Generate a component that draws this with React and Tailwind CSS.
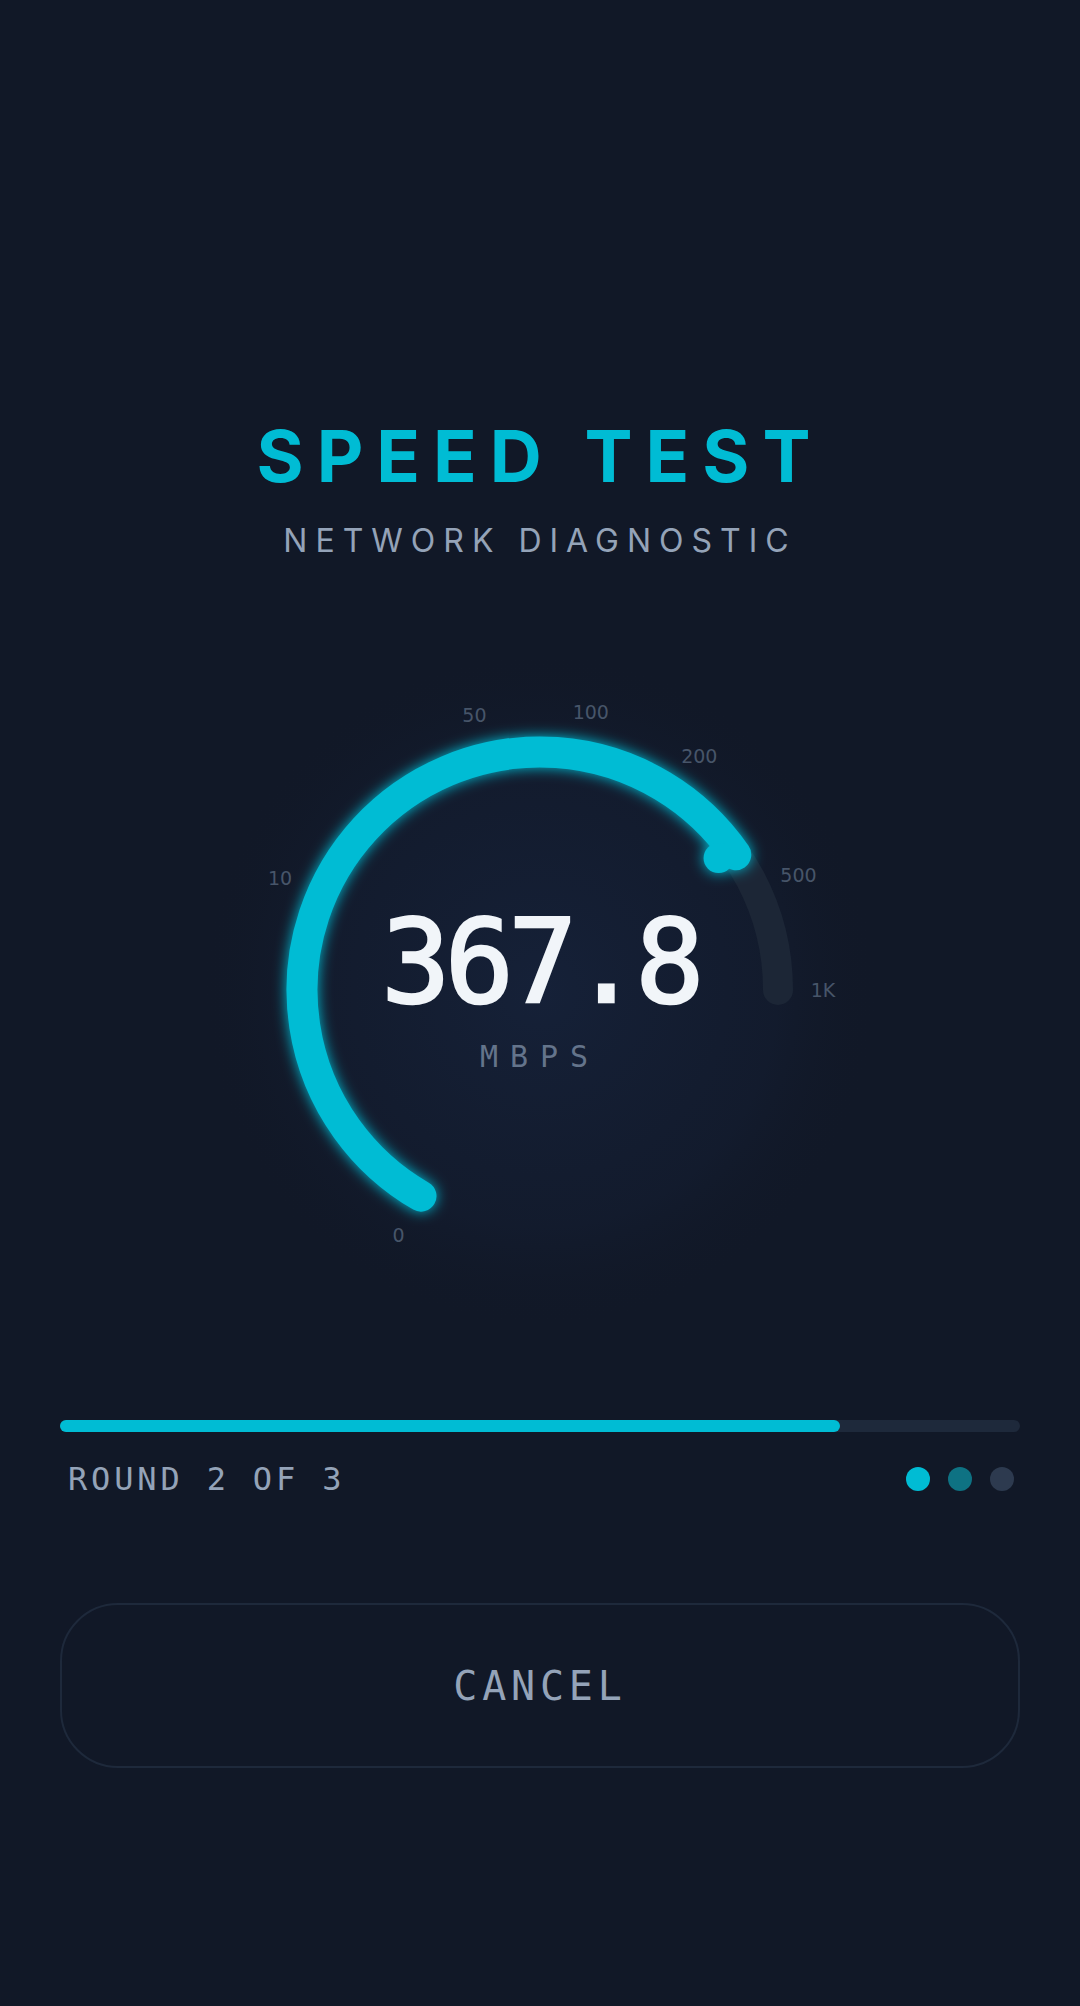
const CX = 350
const CY = 350
const R = 238
const START = -150
const SWEEP = 240

const ticks = [
  { v: 0, label: '0' },
  { v: 10, label: '10' },
  { v: 50, label: '50' },
  { v: 100, label: '100' },
  { v: 200, label: '200' },
  { v: 500, label: '500' },
  { v: 1000, label: '1K' },
]

const angleFor = v => START + (SWEEP * Math.log10(1 + v)) / 3

const polar = (r, deg) => {
  const a = (deg * Math.PI) / 180
  return [CX + r * Math.sin(a), CY - r * Math.cos(a)]
}

const arcPath = (from, to, r = R) => {
  const [x1, y1] = polar(r, from)
  const [x2, y2] = polar(r, to)
  const large = to - from > 180 ? 1 : 0
  return `M ${x1} ${y1} A ${r} ${r} 0 ${large} 1 ${x2} ${y2}`
}

const Gauge = ({ value }) => {
  const end = angleFor(value)
  const [kx, ky] = polar(222, end - 1.8)

  return (
    <div className="relative mt-[83px] h-[700px] w-[700px]">
      <svg width="700" height="700" viewBox="0 0 700 700" className="absolute inset-0">
        <defs>
          <radialGradient id="halo" cx="50%" cy="50%" r="50%">
            <stop offset="0%" stopColor="#16223a" stopOpacity="0.9" />
            <stop offset="70%" stopColor="#141e33" stopOpacity="0.5" />
            <stop offset="100%" stopColor="#111827" stopOpacity="0" />
          </radialGradient>
          <filter id="glow" x="-30%" y="-30%" width="160%" height="160%">
            <feGaussianBlur in="SourceGraphic" stdDeviation="7" result="blur" />
            <feMerge>
              <feMergeNode in="blur" />
              <feMergeNode in="SourceGraphic" />
            </feMerge>
          </filter>
        </defs>

        <circle cx={CX} cy={CY} r="340" fill="url(#halo)" />

        {/* track */}
        <path d={arcPath(START, START + SWEEP)} fill="none" stroke="#1c2636" strokeWidth="30" strokeLinecap="round" />

        {/* progress */}
        <g filter="url(#glow)">
          <path d={arcPath(START, end)} fill="none" stroke="#00bcd4" strokeWidth="31" strokeLinecap="round" />
          <circle cx={kx} cy={ky} r="15" fill="#00bcd4" />
        </g>

        {ticks.map(t => {
          const [x, y] = polar(283, angleFor(t.v))
          return (
            <text
              key={t.label}
              x={x}
              y={y}
              textAnchor="middle"
              dominantBaseline="central"
              fontFamily="DejaVu Sans, sans-serif"
              fontSize="19"
              fill="#475569"
            >
              {t.label}
            </text>
          )
        })}
      </svg>

      <div className="absolute inset-0 flex flex-col items-center justify-center pb-1">
        <div className="font-[family-name:'DejaVu_Sans_Mono',monospace] text-[115px] font-normal leading-none tracking-[-0.05em] text-[#f1f5f9] [-webkit-text-stroke:2.5px_#f1f5f9]">
          {value.toFixed(1)}
        </div>
        <div className="mt-[22px] font-[family-name:'DejaVu_Sans_Mono',monospace] text-[30px] leading-none tracking-[0.4em] text-[#64748b]">
          MBPS
        </div>
      </div>
    </div>
  )
}

export default function App() {
  const round = 2
  const rounds = 3

  return (
    <div className="flex min-h-[2006px] w-full flex-col items-center bg-[#111827] pt-[420px]">
      <h1 className="font-[family-name:Inter,sans-serif] text-[72px] font-bold leading-none tracking-[0.18em] text-[#00bcd4]">
        SPEED TEST
      </h1>
      <p className="mt-[33px] font-[family-name:Inter,sans-serif] text-[32px] font-normal leading-none tracking-[0.25em] text-[#94a3b8]">
        NETWORK DIAGNOSTIC
      </p>

      <Gauge value={367.8} />

      <div className="mt-[80px] w-full px-[60px]">
        <div className="h-3 w-full rounded-full bg-[#1e293b]">
          <div className="h-3 w-[81.25%] rounded-full bg-[#00bcd4]" />
        </div>

        <div className="mt-[31px] flex h-8 items-center justify-between pl-2">
          <span className="font-[family-name:'DejaVu_Sans_Mono',monospace] text-[32px] leading-none tracking-[0.12em] text-[#94a3b8]">
            ROUND {round} OF {rounds}
          </span>
          <div className="mr-1.5 flex items-center gap-[18px]">
            <span className="h-6 w-6 rounded-full bg-[#00bcd4]" />
            <span className="h-6 w-6 rounded-full bg-[#0e7283]" />
            <span className="h-6 w-6 rounded-full bg-[#2d3a4f]" />
          </div>
        </div>

        <button className="mt-[108px] flex h-[165px] w-full items-center justify-center rounded-[58px] border-2 border-[#1e293b] bg-transparent">
          <span className="font-[family-name:'DejaVu_Sans_Mono',monospace] text-[40px] leading-none tracking-[0.12em] text-[#94a3b8]">
            CANCEL
          </span>
        </button>
      </div>
    </div>
  )
}
